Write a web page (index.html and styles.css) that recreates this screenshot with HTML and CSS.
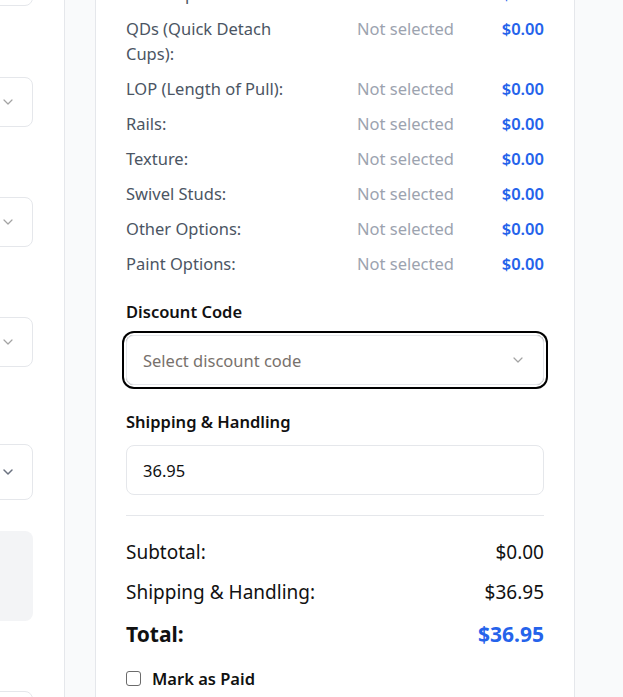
FILE: index.html
```html
<!DOCTYPE html>
<html lang="en">
<head>
<meta charset="utf-8">
<title>Order Summary</title>
<link rel="stylesheet" href="styles.css">
</head>
<body>
<div class="layout">
  <aside class="form-panel">
    <div class="form-col">
      <div class="field-box b1"></div>
      <div class="field-box b2"><svg class="chev" viewBox="0 0 10 6"><polyline points="1,1 5,5 9,1"/></svg></div>
      <div class="field-box b3"><svg class="chev" viewBox="0 0 10 6"><polyline points="1,1 5,5 9,1"/></svg></div>
      <div class="field-box b4"><svg class="chev" viewBox="0 0 10 6"><polyline points="1,1 5,5 9,1"/></svg></div>
      <div class="field-box b5"><svg class="chev dark" viewBox="0 0 10 6"><polyline points="1,1 5,5 9,1"/></svg></div>
      <div class="field-fill"></div>
      <div class="field-box b6"></div>
    </div>
  </aside>
  <main class="main">
    <section class="card">
      <div class="rows">
        <div class="row"><span class="lbl">Stock Options:</span><span class="val">Not selected</span><span class="price">$0.00</span></div>
        <div class="row"><span class="lbl">QDs (Quick Detach Cups):</span><span class="val">Not selected</span><span class="price">$0.00</span></div>
        <div class="row"><span class="lbl">LOP (Length of Pull):</span><span class="val">Not selected</span><span class="price">$0.00</span></div>
        <div class="row"><span class="lbl">Rails:</span><span class="val">Not selected</span><span class="price">$0.00</span></div>
        <div class="row"><span class="lbl">Texture:</span><span class="val">Not selected</span><span class="price">$0.00</span></div>
        <div class="row"><span class="lbl">Swivel Studs:</span><span class="val">Not selected</span><span class="price">$0.00</span></div>
        <div class="row"><span class="lbl">Other Options:</span><span class="val">Not selected</span><span class="price">$0.00</span></div>
        <div class="row"><span class="lbl">Paint Options:</span><span class="val">Not selected</span><span class="price">$0.00</span></div>
      </div>

      <div class="group">
        <label class="group-label">Discount Code</label>
        <div class="select focused">
          <span class="placeholder">Select discount code</span>
          <svg class="chev" viewBox="0 0 10 6"><polyline points="1,1 5,5 9,1"/></svg>
        </div>
      </div>

      <div class="group">
        <label class="group-label ship">Shipping &amp; Handling</label>
        <div class="input">36.95</div>
      </div>

      <hr class="divider">

      <div class="totals">
        <div class="trow"><span>Subtotal:</span><span>$0.00</span></div>
        <div class="trow"><span>Shipping &amp; Handling:</span><span>$36.95</span></div>
        <div class="trow total"><span>Total:</span><span class="blue">$36.95</span></div>
      </div>

      <label class="paid"><input type="checkbox" class="cb"><span>Mark as Paid</span></label>
    </section>
  </main>
</div>
</body>
</html>
```

FILE: styles.css
```css
* { box-sizing: border-box; }
html, body { margin: 0; padding: 0; height: 100%; overflow: hidden; }
body {
  font-family: "Noto Sans", "Open Sans", sans-serif;
  color: #111827;
  background: #f9fafb;
}
.layout { display: flex; height: 697px; }

.form-panel {
  width: 65px;
  flex: none;
  background: #fff;
  border-right: 1px solid #e5e7eb;
  overflow: hidden;
}
.form-col {
  display: flex;
  flex-direction: column;
  margin-left: -300px;
  width: 333px;
}
.field-box {
  height: 50px;
  border: 1px solid #e5e7eb;
  border-radius: 8px;
  display: flex;
  align-items: center;
  justify-content: flex-end;
  padding-right: 19px;
  flex: none;
}
.b1 { margin-top: -44px; }
.b2 { margin-top: 71px; }
.b3 { margin-top: 70px; }
.b4 { margin-top: 70px; }
.b5 { margin-top: 77px; height: 56px; }
.b6 { margin-top: 70px; }
.field-fill {
  margin-top: 31px;
  height: 90px;
  background: #f3f4f6;
  border-radius: 8px;
  flex: none;
}
.chev { width: 10px; height: 6px; overflow: visible; }
.chev polyline { fill: none; stroke: #a3a3a3; stroke-width: 1.2; stroke-linecap: round; stroke-linejoin: round; }
.chev.dark polyline { stroke: #6b7280; stroke-width: 1.5; }

.main {
  flex: 1;
  padding-left: 30px;
}
.card {
  width: 480px;
  background: #fff;
  border: 1px solid #e5e7eb;
  border-top: none;
  margin-top: -19px;
  padding: 0 30px 40px;
}
.rows { display: flex; flex-direction: column; gap: 10px; }
.row {
  display: grid;
  grid-template-columns: 183px 96px 1fr;
  column-gap: 48px;
  font-size: 16.5px;
  line-height: 25px;
}
.lbl { color: #4b5563; }
.val { color: #9ca3af; white-space: nowrap; }
.price { color: #2563eb; font-weight: 600; text-align: right; }

.group { display: flex; flex-direction: column; }
.group-label {
  font-size: 16.5px;
  font-weight: 600;
  line-height: 25px;
  color: #111;
  margin-top: 23px;
  margin-bottom: 11px;
}
.group-label.ship { margin-top: 24px; }
.select, .input {
  height: 50px;
  border: 1px solid #e5e7eb;
  border-radius: 8px;
  display: flex;
  align-items: center;
  padding: 0 16px;
  font-size: 16.5px;
}
.select { justify-content: space-between; padding-right: 20px; }
.select.focused { box-shadow: 0 0 0 2px #fff, 0 0 0 4px #000; border-radius: 8px; }
.placeholder { color: #78716c; }
.input { color: #111; }

.divider {
  border: none;
  border-top: 1px solid #e5e7eb;
  margin: 20px 0 0;
}
.totals { display: flex; flex-direction: column; gap: 10px; margin-top: 21px; }
.trow {
  display: flex;
  justify-content: space-between;
  font-size: 19px;
  line-height: 30px;
  color: #111;
}
.trow.total { font-size: 21px; font-weight: 700; line-height: 32px; margin-top: 1px; }
.blue { color: #2563eb; }

.paid {
  display: flex;
  align-items: center;
  gap: 11px;
  margin-top: 16px;
  font-size: 16.5px;
  font-weight: 600;
  color: #111;
  line-height: 25px;
}
.cb {
  appearance: none;
  -webkit-appearance: none;
  margin: 0;
  width: 15px;
  height: 15px;
  border: 1px solid #6b6b6b;
  border-radius: 3px;
  background: #fff;
}
```
